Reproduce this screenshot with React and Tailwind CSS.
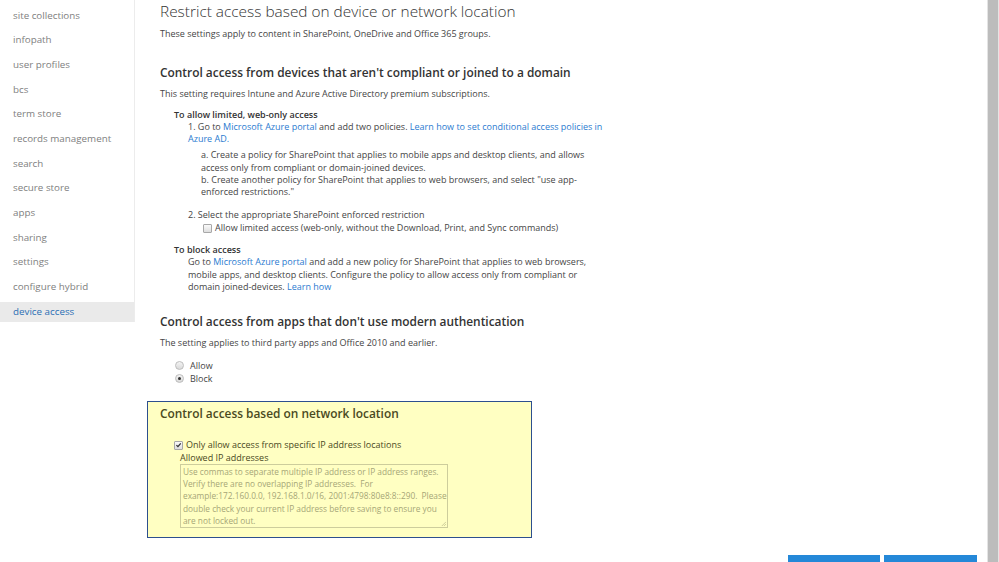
import React from "react";

const NAV = [
  "site collections",
  "infopath",
  "user profiles",
  "bcs",
  "term store",
  "records management",
  "search",
  "secure store",
  "apps",
  "sharing",
  "settings",
  "configure hybrid",
  "device access",
];

const FONT = { fontFamily: '"Open Sans", "Noto Sans", sans-serif' };

const Link = ({ children }) => <span className="text-[#2b7bd0]">{children}</span>;

const Checkbox = ({ checked }) => (
  <span className="inline-flex h-[9px] w-[9px] shrink-0 items-center justify-center rounded-[1px] border border-[#a8a8a8] bg-gradient-to-b from-[#fafafa] to-[#dedede]">
    {checked && (
      <svg viewBox="0 0 10 10" className="h-[8px] w-[8px]">
        <path d="M2 5.2 L4.2 7.4 L8.2 2.6" fill="none" stroke="#333" strokeWidth="1.8" />
      </svg>
    )}
  </span>
);

const Radio = ({ checked }) => (
  <span className="inline-flex h-[9px] w-[9px] shrink-0 items-center justify-center rounded-full border border-[#bdbdbd] bg-gradient-to-b from-[#f4f4f4] to-[#d9d9d9]">
    {checked && <span className="h-[3px] w-[3px] rounded-full bg-[#333]" />}
  </span>
);

export default function App() {
  return (
    <div className="flex h-[562px] w-[999px] overflow-hidden bg-white text-[#454545]" style={FONT}>
      <aside className="w-[135px] shrink-0 self-start border-r border-[#ececec] pt-[6px]">
        <nav className="flex flex-col gap-[4.67px]">
          {NAV.map((item) => {
            const active = item === "device access";
            return (
              <div
                key={item}
                className={
                  "flex h-[20px] items-center pl-[13px] text-[9.8px] " +
                  (active ? "bg-[#eaeaea] text-[#2a6fb5]" : "text-[#808080]")
                }
              >
                {item}
              </div>
            );
          })}
        </nav>
      </aside>

      <main className="flex-1 pl-[25px] pt-[2px]">
        <h1 className="text-[15.4px] font-light leading-[20px] text-[#333]">
          Restrict access based on device or network location
        </h1>
        <p className="mt-[6px] text-[9px] leading-[12.3px]">
          These settings apply to content in SharePoint, OneDrive and Office 365 groups.
        </p>

        <h2 className="mt-[23.7px] text-[11.9px] font-semibold leading-[16px] text-[#333]">
          Control access from devices that aren't compliant or joined to a domain
        </h2>
        <p className="mt-[7.8px] text-[9px] leading-[12.3px]">
          This setting requires Intune and Azure Active Directory premium subscriptions.
        </p>

        <div className="ml-[14px] text-[9px] leading-[12.3px]">
          <div className="mt-[8.8px] font-semibold text-[#333]">To allow limited, web-only access</div>
          <div className="ml-[14px]">
            <div>
              1. Go to <Link>Microsoft Azure portal</Link> and add two policies.{" "}
              <Link>Learn how to set conditional access policies in</Link>
              <br />
              <Link>Azure AD.</Link>
            </div>
            <div className="mt-[3.6px] ml-[13px]">
              a. Create a policy for SharePoint that applies to mobile apps and desktop clients, and allows
              <br />
              access only from compliant or domain-joined devices.
              <br />
              b. Create another policy for SharePoint that applies to web browsers, and select "use app-
              <br />
              enforced restrictions."
            </div>
            <div className="mt-[10.6px]">2. Select the appropriate SharePoint enforced restriction</div>
            <div className="mt-[0.7px] ml-[15px] flex items-center gap-[3px]">
              <Checkbox />
              <span>Allow limited access (web-only, without the Download, Print, and Sync commands)</span>
            </div>
          </div>

          <div className="mt-[9.6px] font-semibold text-[#333]">To block access</div>
          <div className="ml-[14px]">
            Go to <Link>Microsoft Azure portal</Link> and add a new policy for SharePoint that applies to web browsers,
            <br />
            mobile apps, and desktop clients. Configure the policy to allow access only from compliant or
            <br />
            domain joined-devices. <Link>Learn how</Link>
          </div>
        </div>

        <h2 className="mt-[19.8px] text-[11.9px] font-semibold leading-[16px] text-[#333]">
          Control access from apps that don't use modern authentication
        </h2>
        <p className="mt-[7.8px] text-[9px] leading-[12.3px]">
          The setting applies to third party apps and Office 2010 and earlier.
        </p>
        <div className="mt-[9.6px] ml-[15px] text-[9px] leading-[13px]">
          <div className="flex items-center gap-[6px]">
            <Radio />
            <span>Allow</span>
          </div>
          <div className="flex items-center gap-[6px]">
            <Radio checked />
            <span>Block</span>
          </div>
        </div>

        <section className="mt-[16.8px] -ml-[13px] w-[385px] border border-[#2d4f8e] bg-[#ffffc2] pb-[9px] pl-[12px] pt-[3px]">
          <h2 className="text-[11.9px] font-semibold leading-[16px] text-[#4a4a1e]">
            Control access based on network location
          </h2>
          <div className="mt-[17.8px] ml-[14px] flex items-center gap-[3px] text-[9px] leading-[12.3px] text-[#4a4a1e]">
            <Checkbox checked />
            <span>Only allow access from specific IP address locations</span>
          </div>
          <div className="ml-[20px] text-[9px] leading-[12.3px] text-[#4a4a1e]">Allowed IP addresses</div>
          <div className="relative ml-[20px] h-[64px] w-[268px] overflow-hidden whitespace-nowrap border border-[#cdcd9c] px-[2px] pt-[1px] text-[8.3px] leading-[12.3px] text-[#a6a677]">
            Use commas to separate multiple IP address or IP address ranges.
            <br />
            Verify there are no overlapping IP addresses.&nbsp; For
            <br />
            example:172.160.0.0, 192.168.1.0/16, 2001:4798:80e8:8::290.&nbsp; Please
            <br />
            double check your current IP address before saving to ensure you
            <br />
            are not locked out.
            <svg viewBox="0 0 6 6" className="absolute bottom-[1px] right-[1px] h-[5px] w-[5px]">
              <path d="M6 1 L1 6 M6 3.5 L3.5 6" stroke="#b8b88a" strokeWidth="0.8" />
            </svg>
          </div>
        </section>

        <div className="mt-[17px] flex justify-end gap-[4px] pr-[10px]">
          <button className="h-[30px] w-[92px] bg-[#2488d8] text-[10px] text-white">Save</button>
          <button className="h-[30px] w-[93px] bg-[#2488d8] text-[10px] text-white">Cancel</button>
        </div>
      </main>

      <div className="h-full w-[12px] shrink-0 border-x border-[#e4e4e4] bg-[#bcbcbc]" />
    </div>
  );
}
